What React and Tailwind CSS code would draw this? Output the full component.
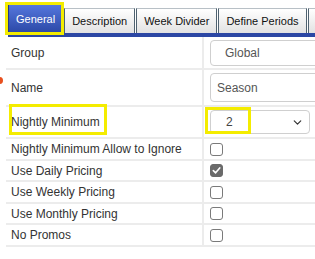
import React from 'react';
import { ChevronDown } from 'lucide-react';

const tabs = ['General', 'Description', 'Week Divider', 'Define Periods', ''];

const Tab = ({ label, active }) => {
  if (active) {
    return (
      <div className="h-[29px] px-[7px] flex items-center text-[11px] text-white bg-linear-to-b from-[#5577dd] to-[#2b48a6] border border-[#23398a] border-b-0 shrink-0">
        {label}
      </div>
    );
  }
  return (
    <div className="h-[25px] min-w-[20px] mt-[4px] px-[7px] flex items-center text-[11px] text-[#111] bg-linear-to-b from-white to-[#e2e2e2] border border-[#b8c0c6] border-l-[#4f6270] border-r-[#4f6270] border-b-0 shrink-0 whitespace-nowrap">
      {label}
    </div>
  );
};

const Check = ({ checked }) => (
  <span
    className={`w-[13px] h-[13px] rounded-[3px] flex items-center justify-center ${
      checked ? 'bg-[#6a6a6a] border border-[#6a6a6a]' : 'border-[1.5px] border-[#7a7a7a] bg-white'
    }`}
  >
    {checked && (
      <svg width="9" height="9" viewBox="0 0 10 10">
        <path d="M1.5 5.2 L4 7.6 L8.6 2.2" fill="none" stroke="white" strokeWidth="1.8" strokeLinecap="round" strokeLinejoin="round" />
      </svg>
    )}
  </span>
);

const Row = ({ label, h, children }) => (
  <div className={`flex border-b-2 border-[#ececec] ${h}`}>
    <div className="w-[198px] shrink-0 border-r-2 border-[#ececec] pl-[5px] flex items-center text-[12px] text-[#333] whitespace-nowrap overflow-hidden">
      {label}
    </div>
    <div className="flex-1 pl-[6px] flex items-center min-w-0">{children}</div>
  </div>
);

export default function App() {
  const checks = [
    ['Nightly Minimum Allow to Ignore', false, 'h-[22px]'],
    ['Use Daily Pricing', true, 'h-[21px]'],
    ['Use Weekly Pricing', false, 'h-[22px]'],
    ['Use Monthly Pricing', false, 'h-[21px]'],
    ['No Promos', false, 'h-[22px]'],
  ];

  return (
    <div className="relative w-[315px] h-[259px] bg-white overflow-hidden" style={{ fontFamily: '"Liberation Sans", Arial, sans-serif' }}>
      {/* tab strip */}
      <div className="pl-[8px] pt-[4px]">
        <div className="flex gap-[1px] items-start h-[29px]">
          {tabs.map((t, i) => (
            <Tab key={i} label={t} active={i === 0} />
          ))}
        </div>
        <div className="h-[4px] bg-[#2c47a4]" />
      </div>

      {/* form rows */}
      <div className="ml-[6px]">
        <Row label="Group" h="h-[33px]">
          <div className="w-[130px] h-[26px] shrink-0 border border-[#cfcfcf] rounded-[4px] flex items-center pl-[14px] text-[12px] text-[#555]">
            Global
          </div>
        </Row>
        <Row label="Name" h="h-[37px]">
          <div className="w-[130px] h-[29px] shrink-0 border border-[#cfcfcf] rounded-[4px] flex items-center pl-[6px] text-[12px] text-[#555]">
            Season
          </div>
        </Row>
        <Row label="Nightly Minimum" h="h-[32px]">
          <div className="w-[100px] h-[24px] border border-[#cfcfcf] rounded-[4px] flex items-center justify-between pl-[15px] pr-[5px] text-[12px] text-[#444]">
            <span>2</span>
            <ChevronDown size={13} strokeWidth={2.2} className="text-[#333]" />
          </div>
        </Row>
        {checks.map(([label, checked, h]) => (
          <Row key={label} label={label} h={h}>
            <Check checked={checked} />
          </Row>
        ))}
      </div>

      {/* required marker */}
      <span className="absolute left-[-4px] top-[77px] w-[7px] h-[7px] rounded-full bg-[#e8501f]" />

      {/* yellow callouts */}
      <div className="absolute left-[5px] top-[2px] w-[59px] h-[33px] border-[3px] border-[#f4ec00]" />
      <div className="absolute left-[9px] top-[104px] w-[98px] h-[31px] border-[3px] border-[#f4ec00]" />
      <div className="absolute left-[205px] top-[107px] w-[46px] h-[27px] border-[3px] border-[#f4ec00]" />
    </div>
  );
}
